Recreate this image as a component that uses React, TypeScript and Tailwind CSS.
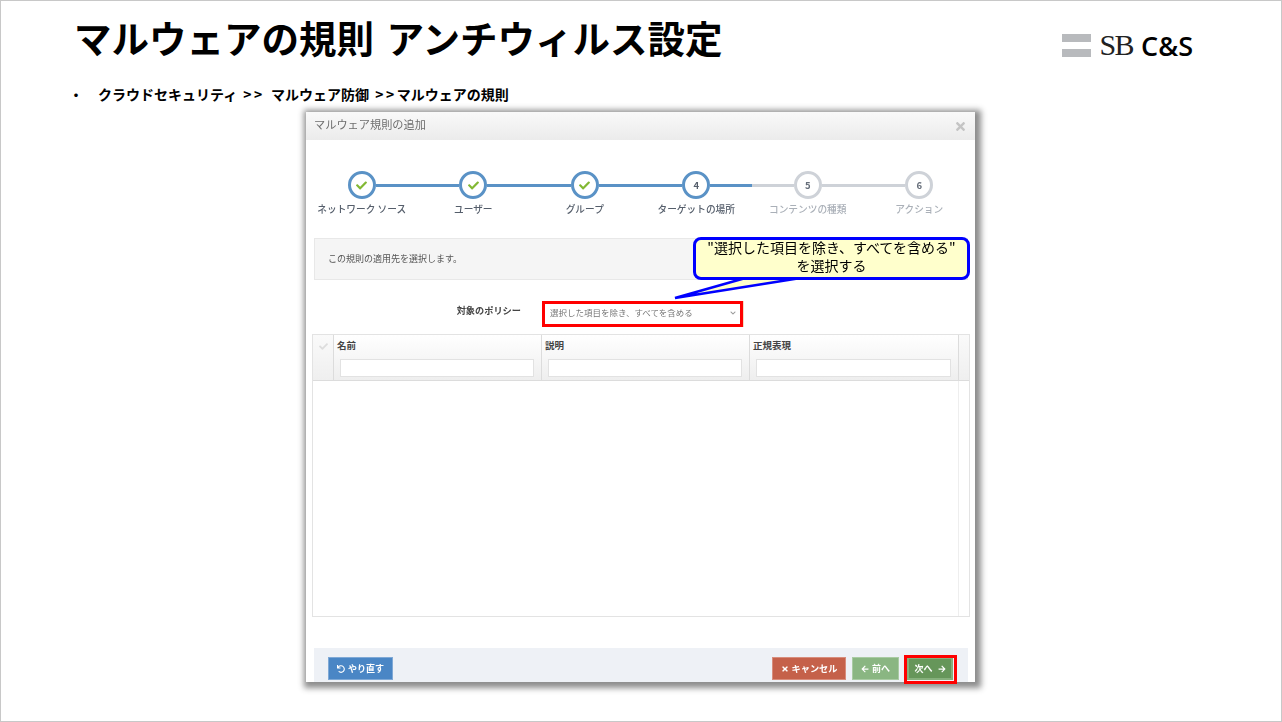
import { FaCheck, FaTimes, FaUndo, FaArrowLeft, FaArrowRight, FaChevronDown } from 'react-icons/fa';

const steps = [
    { label: 'ネットワーク ソース', done: true, active: true, left: 'bg-transparent', right: 'bg-[#5a92c6]' },
    { label: 'ユーザー', done: true, active: true, left: 'bg-[#5a92c6]', right: 'bg-[#5a92c6]' },
    { label: 'グループ', done: true, active: true, left: 'bg-[#5a92c6]', right: 'bg-[#5a92c6]' },
    { label: 'ターゲットの場所', num: 4, active: true, left: 'bg-[#5a92c6]', right: 'bg-[#5a92c6]' },
    { label: 'コンテンツの種類', num: 5, active: false, left: 'bg-[#ced2d8]', right: 'bg-[#ced2d8]' },
    { label: 'アクション', num: 6, active: false, left: 'bg-[#ced2d8]', right: 'bg-transparent' },
];

const columns = [
    { name: '名前', width: 'w-[208px]' },
    { name: '説明', width: 'w-[208px]' },
    { name: '正規表現', width: 'w-[209px]' },
];

function Stepper() {
    return (
        <div className="grid grid-cols-6 mt-[31px]">
            {steps.map((s) => (
                <div key={s.label} className="flex flex-col items-center">
                    <div className="flex items-center w-full">
                        <div className={`flex-1 h-[3px] ${s.left}`} />
                        <div className={`w-[28px] h-[28px] rounded-full border-[3.5px] bg-white flex items-center justify-center ${s.active ? 'border-[#5a92c6]' : 'border-[#ced2d8]'}`}>
                            {s.done ? <FaCheck className="text-[#82b833] w-[11px] h-[11px]" /> : <span className={`text-[9.5px] font-bold ${s.active ? 'text-[#555e6b]' : 'text-[#666e7a]'}`}>{s.num}</span>}
                        </div>
                        <div className={`flex-1 h-[3px] ${s.right}`} />
                    </div>
                    <div className={`mt-[3px] text-[9.7px] font-medium leading-[14px] whitespace-nowrap ${s.active ? 'text-[#555e6b]' : 'text-[#aab0b8]'}`}>{s.label}</div>
                </div>
            ))}
        </div>
    );
}

function RuleTable() {
    return (
        <div className="ml-[6px] w-[658px] h-[283px] border border-[#e3e3e3] flex flex-col">
            <div className="flex h-[46px] border-b border-[#dcdcdc]">
                <div className="w-[21px] flex justify-center pt-[7px] bg-gradient-to-b from-[#fafafa] to-[#efefef] border-r border-[#dcdcdc]">
                    <FaCheck className="text-[#dddddd] w-[9px] h-[9px]" />
                </div>
                {columns.map((c) => (
                    <div key={c.name} className={`${c.width} bg-gradient-to-b from-white to-[#eeeeee] border-r border-[#dcdcdc] px-[3px] pt-[3px]`}>
                        <div className="text-[9.5px] leading-[14px] font-bold text-[#444444]">{c.name}</div>
                        <div className="mt-[7px] ml-[3px] mr-[4px] h-[18px] bg-white border border-[#e2e2e2]" />
                    </div>
                ))}
                <div className="flex-1 bg-gradient-to-b from-[#fafafa] to-[#efefef]" />
            </div>
            <div className="flex-1 flex justify-end">
                <div className="w-[11px] border-l border-[#eeeeee]" />
            </div>
        </div>
    );
}

function Footer() {
    return (
        <div className="mt-[31px] ml-[8px] mr-[7px] h-[34px] bg-[#eef1f6] flex justify-between pt-[9px] pl-[14px] pr-[15px]">
            <button className="w-[65px] h-[23px] bg-[#4a86c5] border border-[#7fa9d6] text-white text-[9px] font-bold flex items-center justify-center gap-[3px]">
                <FaUndo className="w-[8px] h-[8px]" />やり直す
            </button>
            <div className="flex">
                <button className="w-[74px] h-[23px] bg-[#c5614a] border border-[#d88d7c] text-white text-[9.2px] font-bold flex items-center justify-center gap-[3px]">
                    <FaTimes className="w-[8px] h-[8px]" />キャンセル
                </button>
                <button className="ml-[6px] w-[47px] h-[23px] bg-[#8ab682] border border-[#a9cba3] text-white text-[9px] font-bold flex items-center justify-center gap-[3px]">
                    <FaArrowLeft className="w-[8px] h-[8px]" />前へ
                </button>
                <button className="ml-[8px] w-[46px] h-[23px] bg-[#66965a] border-2 border-[#86b07c] text-white text-[9px] font-bold flex items-center justify-center gap-[5px]">
                    次へ<FaArrowRight className="w-[8px] h-[8px]" />
                </button>
            </div>
        </div>
    );
}

function Modal() {
    return (
        <div className="ml-[305px] w-[669px] h-[570px] bg-white overflow-hidden shadow-[2px_2px_6px_4px_rgba(0,0,0,0.45)] blur-[0.3px]">
            <div className="h-[28px] bg-gradient-to-b from-[#f9f9f9] to-[#ebebeb] flex items-center justify-between pl-[8px] pr-[8px] pb-[3px]">
                <span className="text-[11.2px] text-[#6e6e6e]">マルウェア規則の追加</span>
                <FaTimes className="text-[#c4c4c4] w-[13px] h-[13px] mt-[3px]" />
            </div>
            <Stepper />
            <div className="mt-[22px] ml-[8px] mr-[7px] h-[42px] bg-[#f5f5f5] border border-[#e8e8e8] flex items-center pl-[13px] text-[9px] text-[#555555]">
                この規則の適用先を選択します。
            </div>
            <div className="flex mt-[21px] h-[26px]">
                <div className="w-[215px] text-right text-[9.2px] font-bold text-[#444444] leading-[18px]">対象のポリシー</div>
                <div className="ml-[22px] w-[201px] h-[26px] bg-white border border-[#f3dcc4] flex items-center justify-between pl-[6px] pr-[7px] pb-[3px] text-[8.5px] text-[#777777]">
                    選択した項目を除き、すべてを含める
                    <FaChevronDown className="text-[#999999] w-[6px] h-[6px]" />
                </div>
            </div>
            <div className="mt-[7px]">
                <RuleTable />
            </div>
            <Footer />
        </div>
    );
}

export default function App() {
    return (
        <div className="relative w-[1282px] h-[722px] bg-white border border-[#c8c8c8] overflow-hidden font-['Noto_Sans_CJK_JP','Liberation_Sans',sans-serif]">
            <div className="flex justify-between h-[70px] pt-[14px] pl-[73px] pr-[88px]">
                <h1 className="text-[37.5px] leading-[44px] font-bold text-black whitespace-nowrap [word-spacing:4px]">マルウェアの規則 アンチウィルス設定</h1>
                <div className="flex items-center h-[24px] mt-[18px]">
                    <div className="flex flex-col gap-[7px] mr-[8px] mt-[1px]">
                        <div className="w-[29px] h-[8px] bg-[#b8babd]" />
                        <div className="w-[29px] h-[8px] bg-[#b8babd]" />
                    </div>
                    <span className="font-['Liberation_Serif',serif] text-[30px] tracking-[-1.5px] text-[#222222] leading-none">SB</span>
                    <span className="ml-[8px] font-['Open_Sans',sans-serif] font-semibold text-[27px] text-black leading-none">C&amp;S</span>
                </div>
            </div>
            <div className="flex h-[41px] pt-[13px] pl-[68px] text-[14px] leading-[20px] font-bold text-black whitespace-nowrap [word-spacing:3px]">
                <span className="w-[29px]">・</span>
                <span>クラウドセキュリティ <span className="tracking-[2.5px]">&gt;&gt;</span> マルウェア防御 <span className="tracking-[2.5px]">&gt;&gt;</span>マルウェアの規則</span>
            </div>
            <Modal />

            {/* annotations over the screenshot */}
            <div className="absolute left-[541px] top-[300px] w-[201px] h-[26px] border-[3px] border-[#ff0000]" />
            <div className="absolute left-[903px] top-[654px] w-[53px] h-[29px] border-[3px] border-[#ff0000]" />
            <svg className="absolute left-[660px] top-[270px]" width="160" height="30" viewBox="0 0 160 30">
                <polygon points="88,6 14,27 146,6" fill="#ffffcc" stroke="#0000ff" strokeWidth="2.5" />
            </svg>
            <div className="absolute left-[692px] top-[236px] w-[277px] h-[43px] rounded-[8px] border-[3px] border-[#0000ff] bg-[#ffffcc] flex flex-col items-center justify-center text-[14px] leading-[18px] text-black pb-[5px]">
                <div>"選択した項目を除き、すべてを含める"</div>
                <div>を選択する</div>
            </div>
        </div>
    );
}
